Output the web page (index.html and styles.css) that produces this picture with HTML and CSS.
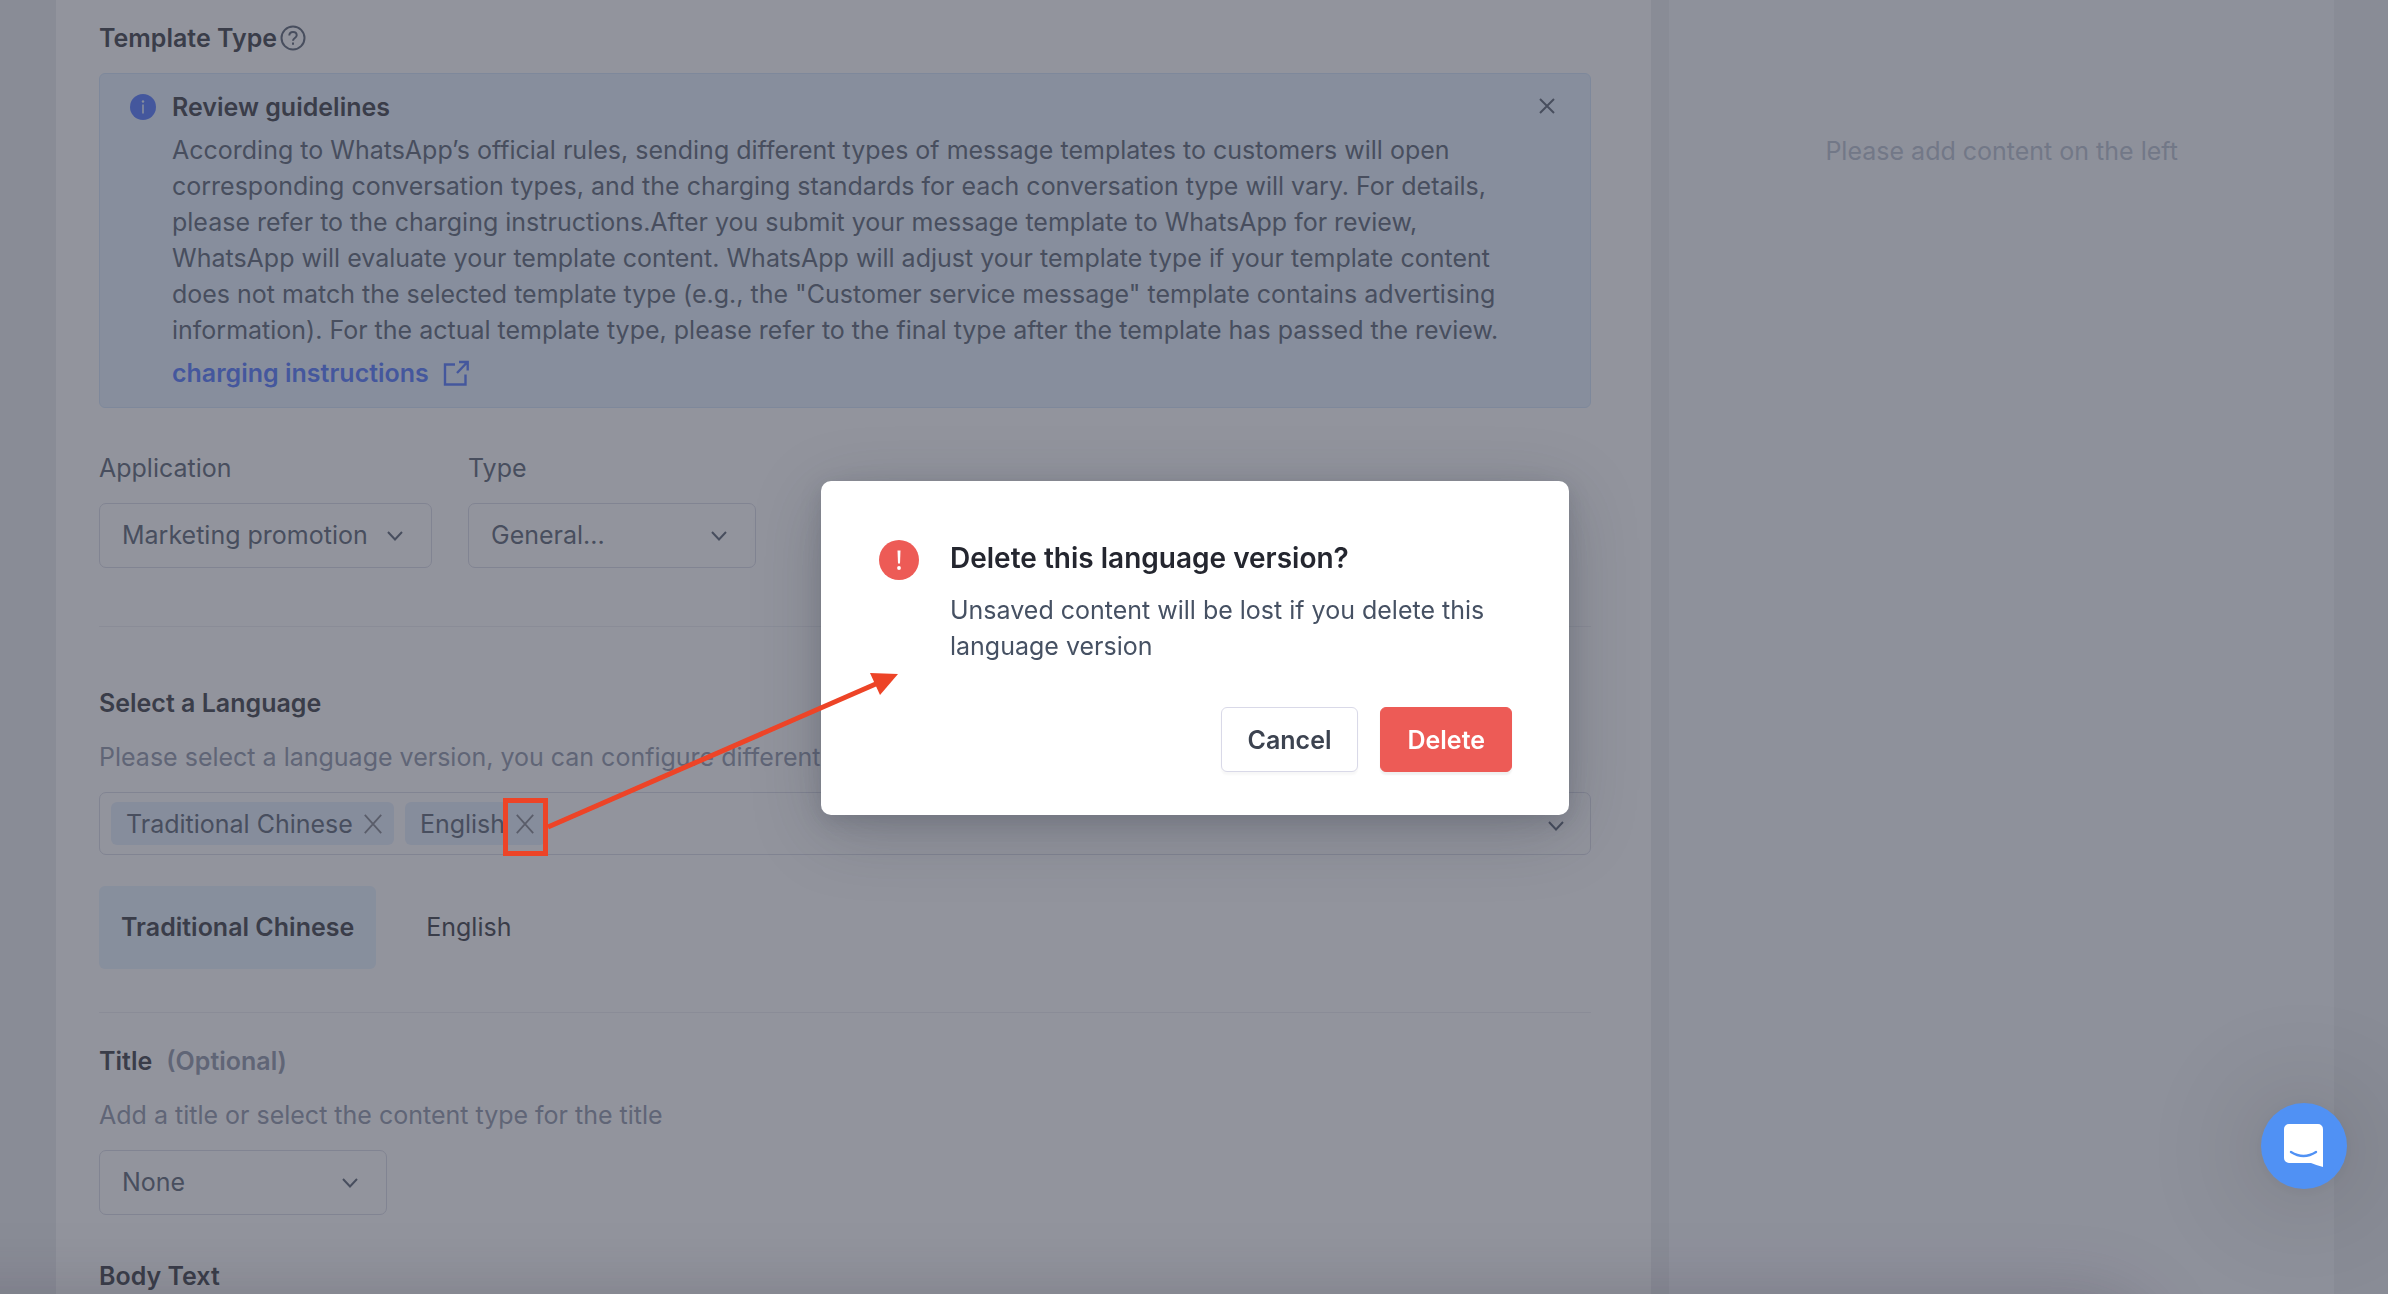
FILE: index.html
```
<!DOCTYPE html>
<html lang="en">

<head>
    <meta charset="UTF-8">
    <meta name="viewport" content="width=device-width, initial-scale=1.0">
    <title>Message template</title>
    <link rel="stylesheet" href="styles.css">
</head>

<body>

    <div class="page">
        <main class="editor">

            <!-- Template type -->
            <section class="section">
                <h2 class="heading">Template Type
                    <svg class="help" viewBox="0 0 26 26" fill="none" stroke="currentColor" stroke-width="2">
                        <circle cx="13" cy="13" r="11.5" />
                        <path d="M9.3 10.6c0-2.2 1.6-3.7 3.7-3.7s3.7 1.4 3.7 3.4c0 2.6-3.7 2.8-3.7 5.4" />
                        <path d="M13 17.6v2.2" />
                    </svg>
                </h2>
                <div class="notice">
                    <svg class="notice-icon" viewBox="0 0 26 26">
                        <circle cx="13" cy="13" r="13" fill="#3e68ff" />
                        <circle cx="13" cy="7.5" r="1.2" fill="#e4f1ff" />
                        <path d="M13 10.5v9" stroke="#e4f1ff" stroke-width="1.6" />
                    </svg>
                    <div class="notice-body">
                        <h3 class="heading">Review guidelines</h3>
                        <p>According to WhatsApp’s official rules, sending different types of message templates to customers will open corresponding conversation types, and the charging standards for each conversation type will vary. For details, please refer to the charging instructions.After you submit your message template to WhatsApp for review, WhatsApp will evaluate your template content. WhatsApp will adjust your template type if your template content does not match the selected template type (e.g., the "Customer service message" template contains advertising information). For the actual template type, please refer to the final type after the template has passed the review.</p>
                        <a class="notice-link" href="#">charging instructions
                            <svg viewBox="0 0 26 26" fill="none" stroke="currentColor" stroke-width="2.4">
                                <path d="M12 4.5H2v20h20.500V14.500M14 13L24 2.500M16 2H24.700V10.500" />
                            </svg>
                        </a>
                    </div>
                    <button class="close" type="button" aria-label="Close">
                        <svg viewBox="0 0 18 18" stroke="currentColor" stroke-width="2">
                            <path d="M2 2L16 16M16 2L2 16" />
                        </svg>
                    </button>
                </div>

                <div class="fields">
                    <div class="field field-wide">
                        <label for="application">Application</label>
                        <div class="select">
                            <select id="application">
                                <option>Marketing promotion</option>
                            </select>
                            <svg class="chevron" viewBox="0 0 18 12"><path d="M2 2L9 9.500L16 2" /></svg>
                        </div>
                    </div>
                    <div class="field">
                        <label for="type">Type</label>
                        <div class="select">
                            <select id="type">
                                <option>General...</option>
                            </select>
                            <svg class="chevron" viewBox="0 0 18 12"><path d="M2 2L9 9.500L16 2" /></svg>
                        </div>
                    </div>
                </div>
            </section>

            <!-- Language versions -->
            <section class="section section-language">
                <h2 class="heading">Select a Language</h2>
                <p class="hint">Please select a language version, you can configure different content</p>
                <div class="tags">
                    <span class="tag">Traditional Chinese
                        <button type="button" aria-label="Remove Traditional Chinese">
                            <svg viewBox="0 0 18 20" stroke="currentColor" stroke-width="1.8"><path d="M0.800 0.800L17.200 19.200M17.200 0.800L0.800 19.200" /></svg>
                        </button>
                    </span>
                    <span class="tag">English
                        <button type="button" aria-label="Remove English">
                            <svg viewBox="0 0 18 20" stroke="currentColor" stroke-width="1.8"><path d="M0.800 0.800L17.200 19.200M17.200 0.800L0.800 19.200" /></svg>
                        </button>
                    </span>
                    <svg class="tags-chevron" viewBox="0 0 18 12"><path d="M2 2L9 9.500L16 2" /></svg>
                </div>
                <div class="tabs">
                    <button class="tab active" type="button">Traditional Chinese</button>
                    <button class="tab" type="button">English</button>
                </div>
            </section>

            <!-- Title -->
            <section class="section section-title">
                <h2 class="heading"><label for="title">Title</label> <span class="optional">(Optional)</span></h2>
                <p class="hint">Add a title or select the content type for the title</p>
                <div class="field">
                    <div class="select">
                        <select id="title">
                            <option>None</option>
                        </select>
                        <svg class="chevron" viewBox="0 0 18 12"><path d="M2 2L9 9.500L16 2" /></svg>
                    </div>
                </div>
                <h2 class="heading heading-body">Body Text</h2>
            </section>
        </main>

        <aside class="preview">
            <p>Please add content on the left</p>
        </aside>
    </div>

    <div class="overlay">
        <div class="modal" role="dialog" aria-labelledby="modal-title">
            <div class="modal-content">
                <svg class="modal-icon" viewBox="0 0 40 40">
                    <circle cx="20" cy="20" r="20" fill="#ed5b56" />
                    <path d="M18.500 10.500h3l-0.500 13h-2z" fill="#fff" />
                    <circle cx="20" cy="28" r="1.900" fill="#fff" />
                </svg>
                <div>
                    <h1 id="modal-title">Delete this language version?</h1>
                    <p>Unsaved content will be lost if you delete this language version</p>
                </div>
            </div>
            <div class="modal-actions">
                <button class="btn" type="button">Cancel</button>
                <button class="btn btn-danger" type="button">Delete</button>
            </div>
        </div>
    </div>

    <div class="bottom-shadow"></div>

    <button class="chat" type="button" aria-label="Open chat">
        <svg viewBox="0 0 40 44">
            <path d="M5 0h29a5 5 0 0 1 5 5v38q-6-1.500-12-4H5a5 5 0 0 1-5-5V5a5 5 0 0 1 5-5z" fill="#fff" />
            <path d="M7 28q12.500 8 25 0" fill="none" stroke="#5091f4" stroke-width="2.400" stroke-linecap="round" />
        </svg>
    </button>

    <!-- Callout pointing from the tag's remove button to the dialog -->
    <svg class="callout" viewBox="0 0 400 190">
        <rect x="5.500" y="130.500" width="40" height="53" fill="none" stroke="#ed4427" stroke-width="5" />
        <path d="M48 157L378 13" stroke="#ed4427" stroke-width="5" />
        <path d="M398 4L370 3L380 25z" fill="#ed4427" />
    </svg>

</body>

</html>
```
FILE: styles.css
```
* {
    box-sizing: border-box;
}

body {
    margin: 0;
    height: 100vh;
    overflow: hidden;
    background: #e9eaee;
    color: #465163;
    font-family: Inter, "Liberation Sans", sans-serif;
    font-size: 25px;
    line-height: 36px;
}

h1,
h2,
h3,
p {
    margin: 0;
}

button,
select {
    font: inherit;
    color: inherit;
}

svg {
    display: block;
    flex: none;
}

.page {
    display: grid;
    grid-template-columns: 12fr 5fr;
    gap: 18px;
    height: 100vh;
    padding: 0 54px 0 56px;
}

.editor {
    min-width: 0;
    padding: 0 60px 0 43px;
    background: #fff;
    overflow: hidden;
}

.preview {
    padding-top: 133px;
    background: #f6f7fb;
    color: #b0b8c9;
    text-align: center;
}

.section {
    padding-top: 20px;
}

.section-language {
    margin-top: 58px;
    padding-top: 58px;
    border-top: 1px solid #ebecf1;
}

.section-title {
    margin-top: 43px;
    padding-top: 30px;
    border-top: 1px solid #ebecf1;
}

.heading {
    display: flex;
    align-items: center;
    color: #24262f;
    font-size: 25px;
    font-weight: 600;
}

.heading-body {
    margin-top: 43px;
}

.help {
    width: 26px;
    height: 26px;
    margin-left: 3px;
    color: #465163;
}

.optional {
    margin-left: 14px;
    color: #828a9f;
}

.hint {
    margin: 18px 0 17px;
    color: #828a9f;
    white-space: nowrap;
}

/* Review guidelines */
.notice {
    display: flex;
    margin-top: 17px;
    padding: 15px 34px 16px 30px;
    border: 1px solid #cde2fb;
    border-radius: 6px;
    background: #e4f1ff;
}

.notice-icon {
    width: 26px;
    height: 26px;
    margin: 5px 16px 0 0;
}

.notice-body {
    flex: 1;
    display: flex;
    flex-direction: column;
    align-items: flex-start;
    gap: 7px;
}

.notice-link {
    display: flex;
    align-items: center;
    gap: 14px;
    color: #3e68ff;
    font-weight: 600;
    text-decoration: none;
}

.notice-link svg {
    width: 26px;
    height: 26px;
}

.close,
.tag button {
    padding: 0;
    border: 0;
    background: none;
}

.close {
    align-self: flex-start;
    margin: 8px 0 0 16px;
}

.close svg {
    width: 18px;
    height: 18px;
}

/* Drop-downs */
.fields {
    display: flex;
    gap: 36px;
    margin-top: 42px;
}

.field {
    display: flex;
    flex-direction: column;
    gap: 17px;
    width: 288px;
}

.field-wide {
    width: 333px;
}

.select {
    position: relative;
}

.select select {
    appearance: none;
    display: block;
    width: 100%;
    height: 65px;
    padding: 0 22px 2px;
    border: 1px solid #d5d7e3;
    border-radius: 7px;
    background: none;
}

.chevron,
.tags-chevron {
    width: 18px;
    height: 12px;
    fill: none;
    stroke: #465163;
    stroke-width: 2;
}

.chevron {
    position: absolute;
    top: 27px;
    right: 28px;
}

/* Language tags */
.tags {
    display: flex;
    align-items: center;
    gap: 11px;
    height: 63px;
    padding: 0 25px 0 11px;
    border: 1px solid #d5d7e3;
    border-radius: 7px;
}

.tags-chevron {
    margin-left: auto;
    margin-top: 4px;
}

.tag {
    display: flex;
    align-items: center;
    gap: 11px;
    height: 43px;
    padding: 0 12px 0 15px;
    border-radius: 6px;
    background: #e2edfd;
}

.tag button {
    color: #74777f;
}

.tag svg {
    width: 18px;
    height: 20px;
}

.tabs {
    display: flex;
    gap: 28px;
    margin-top: 31px;
}

.tab {
    height: 83px;
    padding: 0 22px 2px;
    border: 0;
    border-radius: 6px;
    background: none;
    color: #24262f;
}

.tab.active {
    background: #e4f2fe;
    font-weight: 600;
}

/* Dialog */
.overlay {
    position: fixed;
    inset: 0;
    display: flex;
    align-items: center;
    justify-content: center;
    padding: 2px 0 0 2px;
    background: rgba(73, 76, 92, 0.6);
}

.modal {
    width: 748px;
    padding: 55px 57px 43px 58px;
    border-radius: 10px;
    background: #fff;
    box-shadow: 0 16px 70px rgba(40, 44, 60, 0.24), 0 6px 22px rgba(40, 44, 60, 0.16);
}

.modal-content {
    display: flex;
    gap: 31px;
}

.modal-icon {
    width: 40px;
    height: 40px;
    margin-top: 4px;
}

.modal h1 {
    margin-bottom: 12px;
    color: #24262f;
    font-size: 28px;
    font-weight: 600;
    line-height: 44px;
}

.modal-actions {
    display: flex;
    justify-content: flex-end;
    gap: 22px;
    margin-top: 43px;
}

.btn {
    height: 65px;
    padding: 0 26px;
    border: 1px solid #d9d9e8;
    border-radius: 6px;
    background: #fff;
    box-shadow: 0 3px 2px rgba(0, 0, 0, 0.03);
    color: #3c4350;
    font-weight: 600;
}

.btn-danger {
    border-color: #ed5b56;
    background: #ed5b56;
    color: #fff;
    box-shadow: 0 3px 2px rgba(0, 0, 0, 0.06);
}

/* Floating items */
.bottom-shadow {
    position: fixed;
    top: 100%;
    left: -100px;
    width: 94%;
    height: 120px;
    border-radius: 0 60px 0 0;
    box-shadow: 0 10px 70px 10px rgba(45, 40, 55, 0.22);
}

.chat {
    position: fixed;
    right: 41px;
    bottom: 105px;
    display: flex;
    align-items: center;
    justify-content: center;
    width: 86px;
    height: 86px;
    padding: 0;
    border: 0;
    border-radius: 50%;
    background: #5091f4;
    box-shadow: 0 2px 16px rgba(0, 0, 0, 0.06), 0 4px 110px 20px rgba(0, 0, 0, 0.12);
}

.chat svg {
    width: 40px;
    height: 44px;
}

.callout {
    position: fixed;
    top: 670px;
    left: 500px;
    width: 400px;
    height: 190px;
}
```
